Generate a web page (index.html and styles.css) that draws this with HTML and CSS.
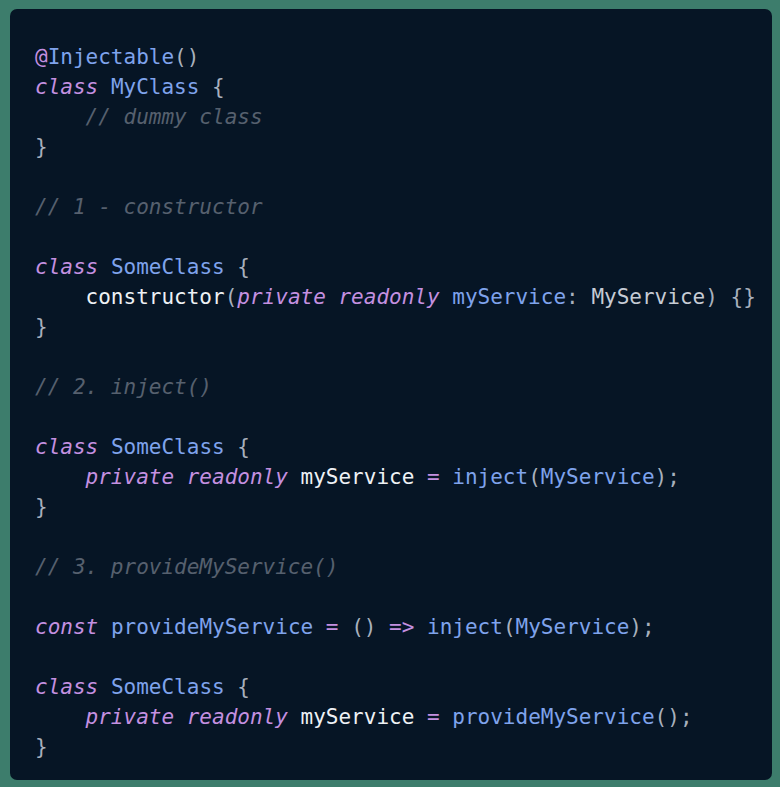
FILE: index.html
```html
<!DOCTYPE html>
<html>
<head>
<meta charset="utf-8">
<link rel="stylesheet" href="styles.css">
</head>
<body>
<div class="panel">
<pre class="code"><span class="kw">@</span><span class="fn">Injectable</span><span class="p">()</span>
<span class="kw i">class</span> <span class="fn">MyClass</span> <span class="p">{</span>
    <span class="cm">// dummy class</span>
<span class="p">}</span>

<span class="cm">// 1 - constructor</span>

<span class="kw i">class</span> <span class="fn">SomeClass</span> <span class="p">{</span>
    <span class="tx">constructor</span><span class="p">(</span><span class="kw i">private readonly</span> <span class="fn">myService</span><span class="p">:</span> <span class="ty">MyService</span><span class="p">)</span> <span class="p">{}</span>
<span class="p">}</span>

<span class="cm">// 2. inject()</span>

<span class="kw i">class</span> <span class="fn">SomeClass</span> <span class="p">{</span>
    <span class="kw i">private readonly</span> <span class="tx">myService</span> <span class="kw">=</span> <span class="fn">inject</span><span class="p">(</span><span class="fn">MyService</span><span class="p">);</span>
<span class="p">}</span>

<span class="cm">// 3. provideMyService()</span>

<span class="kw i">const</span> <span class="fn">provideMyService</span> <span class="kw">=</span> <span class="p">()</span> <span class="kw">=&gt;</span> <span class="fn">inject</span><span class="p">(</span><span class="fn">MyService</span><span class="p">);</span>

<span class="kw i">class</span> <span class="fn">SomeClass</span> <span class="p">{</span>
    <span class="kw i">private readonly</span> <span class="tx">myService</span> <span class="kw">=</span> <span class="fn">provideMyService</span><span class="p">();</span>
<span class="p">}</span></pre>
</div>
</body>
</html>
```
FILE: styles.css
```css
html, body {
  margin: 0;
  padding: 0;
  background: #3d7d6c;
}
body {
  padding: 9px 8px 7px 10px;
  width: 780px;
  height: 787px;
  box-sizing: border-box;
}
.panel {
  background: #061525;
  border-radius: 7px;
  height: 771px;
  box-sizing: border-box;
  padding: 33px 0 0 25px;
}
.code {
  margin: 0;
  font-family: "DejaVu Sans Mono", monospace;
  font-size: 21px;
  line-height: 30px;
  color: #e6e9ee;
  white-space: pre;
}
.kw { color: #c490e0; }
.i { font-style: italic; }
.fn { color: #7fa3ec; }
.p { color: #a8b0bd; }
.tx { color: #eef1f5; }
.ty { color: #c6ccd5; }
.cm { color: #56606e; font-style: italic; }
```
